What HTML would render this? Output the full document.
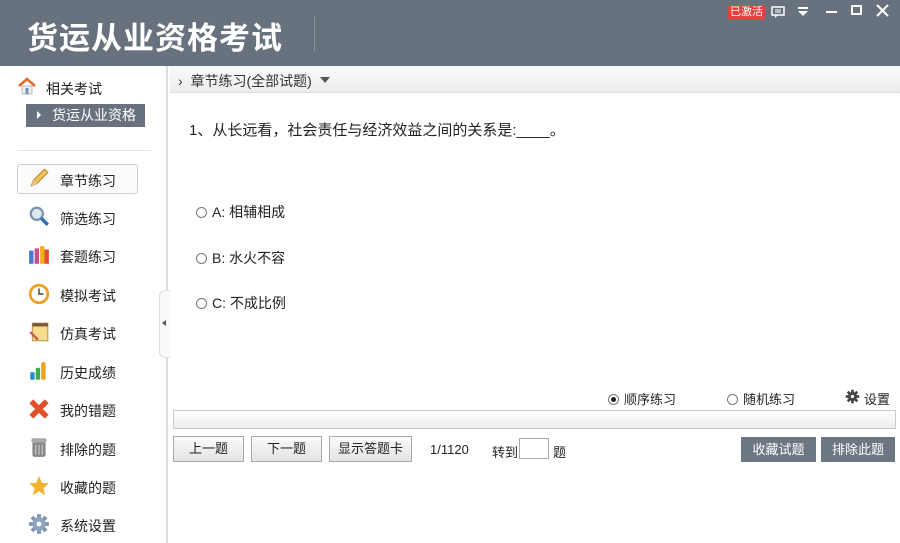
<!DOCTYPE html><html><head><meta charset="utf-8"><style>
*{margin:0;padding:0;box-sizing:border-box}
body{width:900px;height:543px;overflow:hidden;background:#fff;font-family:"Liberation Sans","Noto Sans CJK SC",sans-serif;color:#222;position:relative}
.hd{position:absolute;left:0;top:0;width:900px;height:66px;background:#68727f}
.title{position:absolute;left:27px;top:13px;font-size:31px;color:#fff;letter-spacing:1px;font-weight:bold}
.sep{position:absolute;left:314px;top:16px;width:1px;height:36px;background:#8a929c}
.side{position:absolute;left:0;top:66px;width:168px;height:477px;background:#fff;border-right:2px solid #dcdcdc}
.abs{position:absolute}
.nav{position:absolute;left:60px;font-size:14px;color:#222}
.ic{position:absolute;left:28px;width:22px;height:22px}
.btn{position:absolute;top:436px;height:26px;border:1px solid #aaa;background:linear-gradient(#fafafa,#e4e4e4);font-size:13px;text-align:center;line-height:24px}
.gb{position:absolute;top:437px;height:25px;background:#6d7683;color:#fff;font-size:13px;text-align:center;line-height:25px}
.opt{position:absolute;left:196px;font-size:14px}
.r{display:inline-block;width:11px;height:11px;border:1px solid #777;border-radius:50%;vertical-align:-1px;margin-right:5px;position:relative}
</style></head><body>
<div class="hd"><div class="title">货运从业资格考试</div><div class="sep"></div>
<div class="abs" style="left:728px;top:5px;width:37px;height:15px;background:#e5403d;border-radius:2px;color:#fff;font-size:11px;line-height:15px;text-align:center">已激活</div>
<svg class="abs" style="left:771px;top:6px" width="14" height="12"><rect x="1" y="1" width="12" height="8" fill="none" stroke="#fff" stroke-width="1.5"/><path d="M4 9 L4 12 L7 9" fill="#fff"/><path d="M4 4h6M4 6h6" stroke="#fff"/></svg>
<svg class="abs" style="left:797px;top:6px" width="12" height="12"><rect x="1" y="1" width="10" height="2" fill="#fff"/><path d="M1 5 L11 5 L6 10Z" fill="#fff"/></svg>
<div class="abs" style="left:826px;top:11px;width:11px;height:2px;background:#fff"></div>
<div class="abs" style="left:851px;top:5px;width:11px;height:10px;border:2px solid #fff"></div>
<svg class="abs" style="left:876px;top:4px" width="13" height="13"><path d="M1 1L12 12M12 1L1 12" stroke="#fff" stroke-width="2"/></svg>
</div>
<div class="side">
<svg class="abs" style="left:17px;top:11px" width="20" height="18"><path d="M2 9 L10 2 L18 9" fill="none" stroke="#e06a2a" stroke-width="2.5"/><rect x="5" y="9" width="10" height="8" fill="#eee" stroke="#bbb"/><rect x="8.5" y="11" width="3" height="6" fill="#6b8fc2"/></svg>
<div class="abs" style="left:46px;top:13px;font-size:14px">相关考试</div>
<div class="abs" style="left:26px;top:38px;width:119px;height:23px;background:#68727f;color:#fff;font-size:14px;line-height:23px;padding-left:26px">货运从业资格</div>
<div class="abs" style="left:37px;top:45px;width:0;height:0;border-left:4px solid #fff;border-top:4px solid transparent;border-bottom:4px solid transparent"></div>
<div class="abs" style="left:18px;top:84px;width:133px;height:1px;background:#e4e4e4"></div>
<div class="abs" style="left:17px;top:98px;width:121px;height:30px;border:1px solid #cfcfcf;border-radius:3px;background:#fbfbfb"></div>
</div>
<svg class="ic" style="top:167px" viewBox="0 0 20 20"><path d="M3 17 L5 12 L15 2 L18 5 L8 15Z" fill="#f1c35a" stroke="#b88a2a"/><path d="M3 17 L5 12 L8 15Z" fill="#e9c9a0"/></svg>
<div class="nav" style="top:171px">章节练习</div>
<svg class="ic" style="top:205px" viewBox="0 0 20 20"><circle cx="8" cy="8" r="5.5" fill="#dde8f4" stroke="#7a93ad" stroke-width="2"/><path d="M12 12 L18 18" stroke="#2a6ab4" stroke-width="3"/></svg>
<div class="nav" style="top:209px">筛选练习</div>
<svg class="ic" style="top:244px" viewBox="0 0 20 20"><rect x="1" y="6" width="4" height="12" fill="#3a7fd0"/><rect x="6" y="4" width="4" height="14" fill="#d04a8a"/><rect x="11" y="2" width="4" height="16" fill="#f0b020"/><rect x="15" y="5" width="4" height="13" fill="#e05030"/></svg>
<div class="nav" style="top:247px">套题练习</div>
<svg class="ic" style="top:283px" viewBox="0 0 20 20"><circle cx="10" cy="10" r="8" fill="#fff" stroke="#eea020" stroke-width="2.5"/><path d="M10 5v5h4" stroke="#555" stroke-width="1.5" fill="none"/></svg>
<div class="nav" style="top:286px">模拟考试</div>
<svg class="ic" style="top:321px" viewBox="0 0 20 20"><rect x="4" y="2" width="14" height="16" fill="#f5dd8a" stroke="#b89a50"/><rect x="4" y="2" width="14" height="3" fill="#7a5a3a"/><path d="M2 10 L9 17" stroke="#d05050" stroke-width="2"/></svg>
<div class="nav" style="top:324px">仿真考试</div>
<svg class="ic" style="top:360px" viewBox="0 0 20 20"><rect x="2" y="11" width="4" height="7" rx="1" fill="#2a8ad0"/><rect x="7" y="7" width="4" height="11" rx="1" fill="#3ab04a"/><rect x="12" y="2" width="4" height="16" rx="1" fill="#f0a020"/></svg>
<div class="nav" style="top:363px">历史成绩</div>
<svg class="ic" style="top:398px" viewBox="0 0 20 20"><path d="M3 3L17 17M17 3L3 17" stroke="#e0502a" stroke-width="5"/></svg>
<div class="nav" style="top:401px">我的错题</div>
<svg class="ic" style="top:436px" viewBox="0 0 20 20"><rect x="4" y="5" width="12" height="14" rx="2" fill="#888"/><rect x="3" y="2" width="14" height="4" rx="2" fill="#aaa"/><path d="M7 8v9M10 8v9M13 8v9" stroke="#ccc"/></svg>
<div class="nav" style="top:440px">排除的题</div>
<svg class="ic" style="top:475px" viewBox="0 0 20 20"><path d="M10 1 L12.6 7.2 L19 7.6 L14 11.8 L15.6 18.5 L10 14.8 L4.4 18.5 L6 11.8 L1 7.6 L7.4 7.2Z" fill="#f4b030"/></svg>
<div class="nav" style="top:478px">收藏的题</div>
<svg class="ic" style="top:513px" viewBox="0 0 20 20"><path d="M10 1v18M1 10h18M3.6 3.6l12.8 12.8M16.4 3.6L3.6 16.4" stroke="#7e93ae" stroke-width="3.5"/><circle cx="10" cy="10" r="6" fill="#8ea3be"/><circle cx="10" cy="10" r="2.2" fill="#fff"/></svg>
<div class="nav" style="top:516px">系统设置</div>
<div class="abs" style="left:159px;top:290px;width:11px;height:68px;border:1px solid #ddd;border-right:none;border-radius:6px 0 0 6px;background:#fafafa"></div>
<div class="abs" style="left:162px;top:320px;border-right:4px solid #555;border-top:3px solid transparent;border-bottom:3px solid transparent"></div>
<div class="abs" style="left:170px;top:66px;width:730px;height:27px;background:linear-gradient(#fafafa,#ececec);border-bottom:1px solid #ddd"></div>
<div class="abs" style="left:178px;top:71px;font-size:14px;color:#333">›&nbsp; 章节练习(全部试题)</div>
<div class="abs" style="left:320px;top:77px;border-top:6px solid #555;border-left:5px solid transparent;border-right:5px solid transparent"></div>
<div class="abs" style="left:189px;top:119px;font-size:15px">1、从长远看，社会责任与经济效益之间的关系是:____。</div>
<div class="opt" style="top:202px"><span class="r"></span>A: 相辅相成</div>
<div class="opt" style="top:248px"><span class="r"></span>B: 水火不容</div>
<div class="opt" style="top:293px"><span class="r"></span>C: 不成比例</div>
<div class="abs" style="left:608px;top:389px;font-size:13px"><span class="r"><span style="position:absolute;left:2px;top:2px;width:5px;height:5px;border-radius:50%;background:#222"></span></span>顺序练习</div>
<div class="abs" style="left:727px;top:389px;font-size:13px"><span class="r"></span>随机练习</div>
<svg class="abs" style="left:845px;top:389px" width="15" height="15" viewBox="0 0 20 20"><path d="M10 1v18M1 10h18M3.6 3.6l12.8 12.8M16.4 3.6L3.6 16.4" stroke="#444" stroke-width="3.5"/><circle cx="10" cy="10" r="6" fill="#444"/><circle cx="10" cy="10" r="2.2" fill="#fff"/></svg>
<div class="abs" style="left:864px;top:389px;font-size:13px">设置</div>
<div class="abs" style="left:173px;top:410px;width:723px;height:19px;border:1px solid #ccc;background:linear-gradient(#fff,#ececec)"></div>
<div class="btn" style="left:173px;width:71px">上一题</div>
<div class="btn" style="left:251px;width:71px">下一题</div>
<div class="btn" style="left:329px;width:83px">显示答题卡</div>
<div class="abs" style="left:430px;top:442px;font-size:13px">1/1120</div>
<div class="abs" style="left:492px;top:442px;font-size:13px">转到</div>
<div class="abs" style="left:519px;top:438px;width:30px;height:21px;border:1px solid #aaa"></div>
<div class="abs" style="left:553px;top:442px;font-size:13px">题</div>
<div class="gb" style="left:741px;width:75px">收藏试题</div>
<div class="gb" style="left:821px;width:74px">排除此题</div>
</body></html>
